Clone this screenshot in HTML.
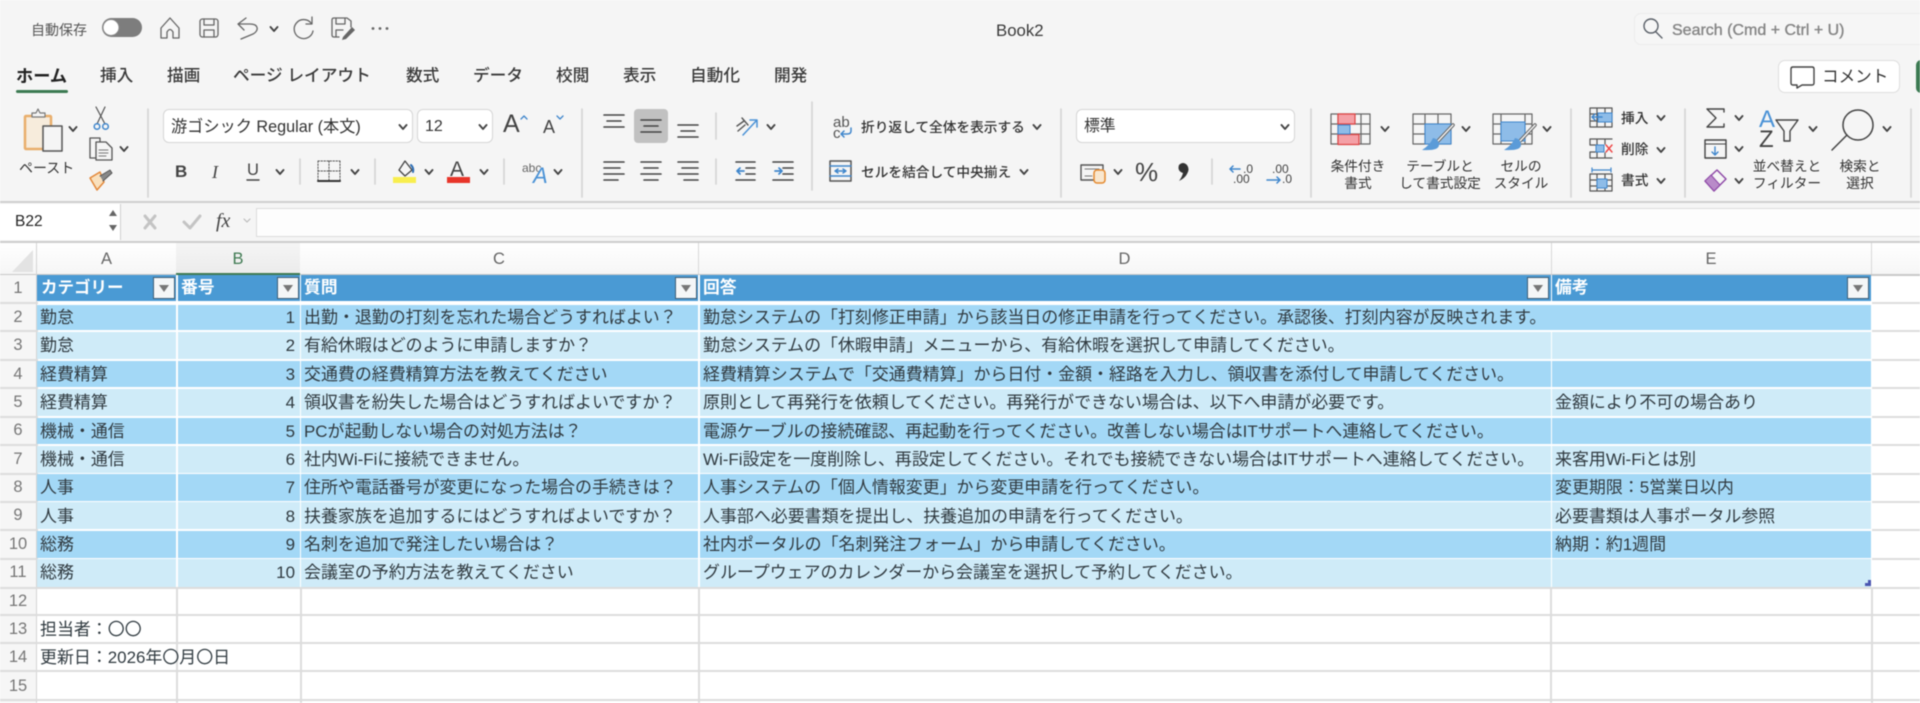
<!DOCTYPE html>
<html lang="ja">
<head>
<meta charset="utf-8">
<title>Book2</title>
<style>
html,body{margin:0;padding:0;width:1920px;height:703px;overflow:hidden;background:#fff}
#p{position:relative;width:1920px;height:703px;overflow:hidden;background:#fff;font-family:"Liberation Sans","Noto Sans CJK JP",sans-serif;color:#2b2b2b;filter:blur(.4px)}
#p div,#p span{position:absolute;white-space:nowrap}
.t{height:20px;line-height:20px}
.tab{top:65px;font-size:16.7px;height:22px;line-height:22px;color:#3a3a3a;font-weight:500}
.sm{font-size:13.7px;color:#333;height:18px;line-height:18px}
.cw{text-align:center;transform:translateX(-50%)}
.f{height:28px;left:0;width:1872px}
.f1{background:#a3d8f6}.f2{background:#cfebf8}
.f span{top:0;font-size:16.95px;line-height:28px;height:28px;color:#303a40}
.hd span{top:0;font-size:16.8px;line-height:26px;height:26px;color:#fff;font-weight:700}
.a{left:40px}.b{left:176px;width:119px;text-align:right}.c{left:304px}.d{left:703px}.e{left:1555px}
.v{top:0;bottom:0;width:2px;background:#fff}
.hd{left:0;top:275px;height:26px;width:1872px;background:#4a9ad4}
.fb{top:2px;width:22px;height:22px;box-sizing:border-box;background:#f4f6f7;border:1.5px solid #3d5f77}
.fb:after{content:"";position:absolute;left:5px;top:7px;border-left:5.5px solid transparent;border-right:5.5px solid transparent;border-top:7px solid #777}
.rh{left:0;width:36px;text-align:center;font-size:16.5px;height:20px;line-height:20px;color:#777}
.ch{top:249px;height:20px;line-height:20px;font-size:16.5px;color:#666;text-align:center}
.hl{height:2px;left:0;width:1920px;background:#dcdcdc}
.vl{width:2px;top:587px;height:116px;background:#dcdcdc}
</style>
</head>
<body>
<div id="p">
<!-- chrome background -->
<div style="left:0;top:0;width:1920px;height:201px;background:#f5f5f5"></div>
<div style="left:0;top:201px;width:1920px;height:2px;background:#cfcfcf"></div>
<div style="left:0;top:203px;width:1920px;height:38px;background:#f5f5f5"></div>
<div style="left:0;top:241px;width:1920px;height:2px;background:#cdcdcd"></div>

<!-- title bar text -->
<span class="t" style="left:31px;top:20px;font-size:14px;color:#555">自動保存</span>
<span class="t" style="left:996px;top:21px;font-size:16.8px;color:#3a3a3a">Book2</span>
<div style="left:1634px;top:13px;width:300px;height:30px;border:1px solid #ececec;background:#f6f6f6;border-radius:7px"></div>
<span class="t" style="left:1672px;top:21px;font-size:16px;color:#858585;-webkit-text-stroke:.35px #858585">Search (Cmd + Ctrl + U)</span>

<!-- tabs -->
<span class="tab" style="left:16px;font-weight:700;color:#222;font-size:17.2px">ホーム</span>
<div style="left:16px;top:90px;width:52px;height:3px;background:#3c7a52;border-radius:2px"></div>
<span class="tab" style="left:100px">挿入</span>
<span class="tab" style="left:167px">描画</span>
<span class="tab" style="left:233px">ページ レイアウト</span>
<span class="tab" style="left:406px">数式</span>
<span class="tab" style="left:473px">データ</span>
<span class="tab" style="left:556px">校閲</span>
<span class="tab" style="left:623px">表示</span>
<span class="tab" style="left:690px">自動化</span>
<span class="tab" style="left:774px">開発</span>

<div style="left:1778px;top:60px;width:122px;height:33px;box-sizing:border-box;background:#fff;border:1px solid #dedede;border-radius:7px"></div>
<span class="t" style="left:1822px;top:67px;font-size:16.6px;color:#333">コメント</span>
<div style="left:1916px;top:60px;width:12px;height:33px;background:#3c7a52;border-radius:5px"></div>

<!-- boxes -->
<div style="left:163px;top:109px;width:250px;height:34px;box-sizing:border-box;background:#fff;border:1px solid #d6d6d6;border-radius:6px"></div>
<div style="left:417px;top:109px;width:76px;height:34px;box-sizing:border-box;background:#fff;border:1px solid #d6d6d6;border-radius:6px"></div>
<div style="left:1076px;top:109px;width:219px;height:34px;box-sizing:border-box;background:#fff;border:1px solid #d6d6d6;border-radius:6px"></div>
<div style="left:634px;top:109px;width:34px;height:34px;background:#c1c1c1;border-radius:4px"></div>
<span class="t" style="left:171px;top:117px;font-size:16.2px;color:#333">游ゴシック Regular (本文)</span>
<span class="t" style="left:425px;top:117px;font-size:16px;color:#333">12</span>
<span class="t" style="left:1084px;top:117px;font-size:15.8px;color:#333">標準</span>

<!-- ribbon labels -->
<span class="sm" style="left:19px;top:159px;font-size:14px">ペースト</span>
<span class="sm" style="left:861px;top:119px;font-weight:500">折り返して全体を表示する</span>
<span class="sm" style="left:861px;top:164px;font-weight:500">セルを結合して中央揃え</span>
<span class="sm cw" style="left:1358px;top:158px">条件付き</span>
<span class="sm cw" style="left:1358px;top:175px">書式</span>
<span class="sm cw" style="left:1440px;top:158px">テーブルと</span>
<span class="sm cw" style="left:1440px;top:175px">して書式設定</span>
<span class="sm cw" style="left:1521px;top:158px">セルの</span>
<span class="sm cw" style="left:1521px;top:175px">スタイル</span>
<span class="sm" style="left:1621px;top:110px;font-weight:500">挿入</span>
<span class="sm" style="left:1621px;top:141px;font-weight:500">削除</span>
<span class="sm" style="left:1621px;top:172px;font-weight:500">書式</span>
<span class="sm cw" style="left:1787px;top:158px">並べ替えと</span>
<span class="sm cw" style="left:1787px;top:175px">フィルター</span>
<span class="sm cw" style="left:1860px;top:158px">検索と</span>
<span class="sm cw" style="left:1860px;top:175px">選択</span>
<span class="t" style="left:175px;top:162px;font-size:17px;font-weight:700;color:#444">B</span>
<span class="t" style="left:212px;top:162px;font-size:18px;font-style:italic;font-family:'Liberation Serif',serif;color:#444">I</span>
<span class="t" style="left:247px;top:160px;font-size:16.5px;color:#444">U</span>
<span class="t" style="left:1135px;top:162px;font-size:26px;line-height:20px;color:#444">%</span>
<span class="t" style="left:1243px;top:159px;font-size:12px;color:#444">.0</span>
<span class="t" style="left:1233px;top:169px;font-size:12px;color:#444">.00</span>
<span class="t" style="left:1272px;top:159px;font-size:12px;color:#444">.00</span>
<span class="t" style="left:1282px;top:169px;font-size:12px;color:#444">.0</span>
<span class="t" style="left:833px;top:113px;font-size:15px;color:#555">ab</span>
<span class="t" style="left:833px;top:124px;font-size:15px;color:#555">c</span>
<span class="t" style="left:522px;top:158px;font-size:12px;color:#666">abc</span>
<span class="t" style="left:503px;top:114px;font-size:25px;color:#444">A</span>
<span class="t" style="left:543px;top:117px;font-size:18px;color:#444">A</span>
<span class="t" style="left:1759px;top:110px;font-size:24px;color:#4a92d6">A</span>
<span class="t" style="left:1759px;top:130px;font-size:24px;color:#444">Z</span>
<span class="t" style="left:450px;top:160px;font-size:21px;color:#444">A</span>
<span class="t" style="left:533px;top:166px;font-size:22px;font-style:italic;color:#4a92d6">A</span>

<!-- formula bar -->
<div style="left:0;top:204px;width:120px;height:36px;background:#fff;border-right:1px solid #cfcfcf"></div>
<span class="t" style="left:15px;top:212px;font-size:15.5px;color:#222">B22</span>
<div style="left:256px;top:208px;width:1664px;height:27px;background:#fdfdfd;border-top:1px solid #dcdcdc;border-bottom:1px solid #dcdcdc;border-left:1px solid #dcdcdc"></div>
<span class="t" style="left:216px;top:211px;font-size:20px;font-style:italic;font-family:'Liberation Serif',serif;color:#444">fx</span>

<!-- icons -->
<svg style="position:absolute;left:0;top:0" width="1920" height="243" viewBox="0 0 1920 243" fill="none" stroke-linecap="round" stroke-linejoin="round">
<defs><path id="ch" d="M-3.5-2 0 2 3.5-2" stroke="#444" stroke-width="1.9"/></defs>
<!-- toggle -->
<rect x="102" y="18" width="40" height="19" rx="9.5" fill="#7d7d7d"/>
<circle cx="111" cy="27.500" r="8" fill="#fff" stroke="#888"/>
<g stroke="#666" stroke-width="1.3">
<path d="M161 28 170 18 179 28V38H173V32Q170 27 167 32V38H161Z"/>
<rect x="200" y="19" width="18" height="18" rx="2.500"/><path d="M204 19V25H214V19M204 37V30H214V37"/>
<path d="M246 18 238 24 244 30M238 24H250C259 24 259 31 253 34L241 39"/>
<path d="M311 23A9.500 9.500 0 1 0 313 31M312 17V24H306"/>
<path d="M351 27V21L347 18H334Q332 18 332 20V35Q332 37 334 37H339M336 18V24H345V18M336 37V30H343"/>
</g>
<path d="M343 37 352 27 355 30 346 39 342 40Z" fill="#666"/>
<g fill="#666"><circle cx="373" cy="28.500" r="1.400"/><circle cx="380" cy="28.500" r="1.400"/><circle cx="387" cy="28.500" r="1.400"/></g>
<g stroke="#5a6068" stroke-width="1.4"><circle cx="1651" cy="26" r="7"/><path d="M1656 32 1662 38"/></g>
<path d="M1791 69Q1791 67 1793 67H1812Q1814 67 1814 69V83Q1814 85 1812 85H1802L1797 88V85H1793Q1791 85 1791 83Z" stroke="#444" stroke-width="1.4"/>

<!-- separators -->
<g stroke="#d4d4d4" stroke-width="1.6">
<path d="M148 109V197M582 109V197M812 102V190M1061 109V197M1311 109V197M1571 109V197M1685 109V197M1911 109V197"/>
<path d="M300 159V184M375 159V184M504 159V184M716 113V139M716 159V184M1212 159V184"/>
</g>

<!-- clipboard -->
<rect x="25" y="116" width="26" height="33" rx="1" stroke="#e9ae6c" stroke-width="2.500" fill="#f7ecdc"/>
<path d="M32 117V113H36L38 109 40 113H45V117Z" fill="#f5f5f5" stroke="#777" stroke-width="1.2"/>
<rect x="43" y="126" width="19" height="25" fill="#f5f5f5" stroke="#555" stroke-width="1.5"/>
<!-- scissors -->
<path d="M96 107 105 124M105 107 97 124" stroke="#555" stroke-width="1.2"/>
<circle cx="97" cy="126.500" r="2.800" stroke="#3f86cc" stroke-width="1.500"/><circle cx="105.500" cy="126.500" r="2.800" stroke="#3f86cc" stroke-width="1.500"/>
<!-- copy -->
<path d="M99 158H90V138H100V142" stroke="#555" stroke-width="1.300"/>
<path d="M96 142H106L112 148V160H96Z" fill="#f5f5f5" stroke="#555" stroke-width="1.300"/><path d="M99 150H108M99 153H108M99 156H106" stroke="#777"/>
<!-- format brush -->
<path d="M90 178 100 172 104 182 97 190Z" fill="#f9e0bd" stroke="#e3883a" stroke-width="1.500"/><path d="M100 176 110 170 112 173 103 181" fill="#888" stroke="#555"/>
<!-- size carets -->
<path d="M522 119 525 116 528 119M558 116 561 119 564 116" stroke="#3f86cc" stroke-width="1.300" transform="translate(-1 0)"/>
<!-- underline -->
<path d="M247 180H259" stroke="#444" stroke-width="1.400"/>
<!-- borders -->
<path d="M318 161H340M318 171H340M329 161V181M318 161V181M340 161V181" stroke="#555" stroke-dasharray="1.500 1.500"/>
<path d="M318 181H340" stroke="#333" stroke-width="2"/>
<!-- fill colour -->
<path d="M399 170 405 161 412 170 405 176Z" stroke="#444" stroke-width="1.300"/><path d="M411 165Q414 168 413 172" stroke="#2f6fb5" stroke-width="2"/>
<rect x="393" y="177" width="23" height="6" fill="#f8ee4e"/>
<rect x="447" y="177" width="23" height="6" fill="#e8352a"/>
<!-- align -->
<g stroke="#444" stroke-width="1.600">
<path d="M604 115H624M607 121H621M604 127H624"/>
<path d="M641 120H661M644 126H658M641 132H661"/>
<path d="M678 125H698M681 131H695M678 137H698"/>
<path d="M604 162H624M604 168H620M604 174H624M604 180H618"/>
<path d="M641 162H661M644 168H658M641 174H661M644 180H658"/>
<path d="M678 162H698M682 168H698M678 174H698M684 180H698"/>
<path d="M736 162H755M746 168H755M746 174H755M736 180H755"/>
<path d="M773 162H793M783 168H793M783 174H793M773 180H793"/>
</g>
<path d="M737 171H744M737 171 740 168M737 171 740 174M782 171H775M782 171 779 168M782 171 779 174" stroke="#3f86cc" stroke-width="1.700"/>
<path d="M743 135 757 120M750 120H757V127" stroke="#4a92d6" stroke-width="1.500"/>
<path d="M737 126 744 121M742 118 748 125M738 131 745 125" stroke="#555" stroke-width="1.400"/>
<!-- wrap arrow -->
<path d="M851 128V131Q851 134 847 134H841M841 134 844 131M841 134 844 137" stroke="#3f86cc" stroke-width="1.500"/>
<!-- merge -->
<rect x="830" y="161" width="21" height="20" stroke="#555" stroke-width="1.500"/><path d="M830 166H851M830 176H851" stroke="#3f86cc" stroke-width="1.400"/>
<path d="M835 171H846M835 171 838 169M835 171 838 173M846 171 843 169M846 171 843 173" stroke="#3f86cc" stroke-width="1.400"/>
<!-- accounting -->
<rect x="1081" y="165" width="22" height="15" stroke="#555" stroke-width="1.400"/><path d="M1085 169H1099M1085 176H1092" stroke="#777"/>
<rect x="1094" y="170" width="11" height="13" rx="3" fill="#f9e7cf" stroke="#e58a30" stroke-width="1.500"/>
<!-- comma style -->
<path d="M1179 165Q1183 161 1187 165 1190 169 1187 174 1185 178 1179 181 1182 177 1183 173 1177 171 1179 165Z" fill="#333"/>
<path d="M1230 169H1240M1230 169 1233 166M1230 169 1233 172M1280 180H1267M1280 180 1277 177M1280 180 1277 183" stroke="#3f86cc" stroke-width="1.500"/>
<!-- conditional -->
<g stroke="#666" stroke-width="1.200">
<path d="M1331 114H1370V144H1331ZM1331 124H1370M1331 134H1370M1338 114V144M1361 114V144"/>
</g>
<rect x="1338" y="114" width="17" height="10" fill="#f4a0a6" stroke="#d44" stroke-width="1.200"/>
<rect x="1338" y="134.500" width="21" height="10" fill="#f4a0a6" stroke="#d44" stroke-width="1.200"/>
<rect x="1338" y="125" width="12" height="9" fill="#8ebce8" stroke="#3f86cc"/>
<!-- table -->
<g stroke="#666" stroke-width="1.200"><path d="M1413 114H1451V144H1413ZM1413 124H1451M1413 134H1451M1425 114V144M1438 114V144"/></g>
<rect x="1425" y="124" width="26" height="20" fill="#8ebce8" stroke="#3f86cc"/>
<path d="M1453 125 1438 141" stroke="#666" stroke-width="3.500"/><path d="M1453 125 1438 141" stroke="#f5f5f5" stroke-width="1.500"/>
<path d="M1433 138Q1439 139 1439 145T1422 150Q1430 145 1433 138Z" fill="#5b9bd8"/>
<!-- style -->
<g stroke="#666" stroke-width="1.200"><path d="M1493 114H1532V144H1493ZM1493 124H1532M1493 134H1532M1501 114V144M1525 114V144"/></g>
<rect x="1501" y="122" width="24" height="19" fill="#8ebce8" stroke="#3f86cc"/>
<path d="M1535 125 1520 141" stroke="#666" stroke-width="3.500"/><path d="M1535 125 1520 141" stroke="#f5f5f5" stroke-width="1.500"/>
<path d="M1515 138Q1521 139 1521 145T1504 150Q1512 145 1515 138Z" fill="#5b9bd8"/>
<!-- insert delete format -->
<g stroke="#555" stroke-width="1.200">
<path d="M1590 108H1612V127H1590ZM1590 114H1612M1590 121H1612M1597 108V127M1605 108V127"/>
<path d="M1590 139H1612M1590 158H1612M1590 139V145H1598V152H1590V158M1597 139V145M1605 139V144M1605 153V158M1597 152V158"/>
<path d="M1590 174H1612V191H1590ZM1590 180H1612M1590 186H1612M1597 174V191M1605 174V191"/>
</g>
<rect x="1598" y="113" width="14" height="9" fill="#8ebce8" stroke="#3f86cc"/>
<path d="M1592 117H1602M1592 117 1595 114M1592 117 1595 120" stroke="#3f86cc" stroke-width="1.500" fill="none"/>
<rect x="1596" y="145" width="8" height="7" fill="#8ebce8" stroke="#3f86cc"/>
<path d="M1606 145 1612 152M1612 145 1606 152" stroke="#e44" stroke-width="1.400"/>
<rect x="1597" y="179" width="10" height="9" fill="#8ebce8" stroke="#3f86cc"/>
<path d="M1592 170H1611M1592 168V172M1611 168V172" stroke="#3f86cc" stroke-width="1.200"/>
<!-- sigma etc -->
<path d="M1724 112V109H1707L1716 118 1707 127H1724V124" stroke="#444" stroke-width="1.400"/>
<rect x="1705" y="140" width="21" height="18" stroke="#444" stroke-width="1.400"/><path d="M1705 144H1726" stroke="#444"/>
<path d="M1715 147V155M1715 155 1712 152M1715 155 1718 152" stroke="#3f86cc" stroke-width="1.400"/>
<path d="M1705 181 1717 170 1726 179 1714 191Z" stroke="#8f4aa8" stroke-width="1.500" fill="#f5f5f5"/><path d="M1705 181 1711 175 1720 185 1714 191Z" fill="#b98bc9" stroke="#8f4aa8"/>
<path d="M1776 120H1798L1790 131V141H1784V131Z" stroke="#444" stroke-width="1.400"/>
<circle cx="1858" cy="125" r="15" stroke="#444" stroke-width="1.500"/><path d="M1847 135 1832 150" stroke="#444" stroke-width="1.500"/>

<!-- name-box arrows -->
<path d="M109 216 113 210 117 216ZM109 225 113 231 117 225Z" fill="#666"/>
<path d="M145 216 155 228M155 216 145 228" stroke="#c4c4c4" stroke-width="3"/>
<path d="M184 222 190 228 200 216" stroke="#c4c4c4" stroke-width="3"/>
<path d="M244 219 247 222 250 219" stroke="#bbb" stroke-width="1.200"/>

<!-- chevrons -->
<use href="#ch" x="274" y="29"/><use href="#ch" x="73" y="129"/><use href="#ch" x="124" y="149"/><use href="#ch" x="403" y="127"/><use href="#ch" x="483" y="127"/>
<use href="#ch" x="280" y="172"/><use href="#ch" x="355" y="172"/><use href="#ch" x="429" y="172"/><use href="#ch" x="484" y="172"/><use href="#ch" x="558" y="172"/>
<use href="#ch" x="771" y="127"/><use href="#ch" x="1037" y="127"/><use href="#ch" x="1024" y="172"/><use href="#ch" x="1285" y="127"/><use href="#ch" x="1118" y="172"/>
<use href="#ch" x="1385" y="129"/><use href="#ch" x="1466" y="129"/><use href="#ch" x="1547" y="129"/>
<use href="#ch" x="1661" y="118"/><use href="#ch" x="1661" y="150"/><use href="#ch" x="1661" y="181"/>
<use href="#ch" x="1739" y="118"/><use href="#ch" x="1739" y="149"/><use href="#ch" x="1739" y="181"/><use href="#ch" x="1813" y="129"/><use href="#ch" x="1887" y="129"/>
</svg>

<!-- column header -->
<div style="left:0;top:243px;width:1920px;height:31px;background:linear-gradient(#fff,#f6f6f6)"></div>
<div style="left:0;top:274px;width:1920px;height:1.500px;background:#c8c8c8"></div>
<div style="left:176px;top:243px;width:124px;height:31px;background:linear-gradient(#f5f5f5,#ebebeb)"></div>
<div style="left:176px;top:273px;width:124px;height:2.500px;background:#3f7a52"></div>
<svg style="position:absolute;left:0;top:243px" width="40" height="32"><path d="M12 29 33 7V29Z" fill="#e3e3e3"/></svg>
<div style="left:36px;top:243px;width:1px;height:32px;background:#d4d4d4"></div>
<div style="left:698px;top:243px;width:1px;height:31px;background:#d8d8d8"></div>
<div style="left:1551px;top:243px;width:1px;height:31px;background:#d8d8d8"></div>
<div style="left:1871px;top:243px;width:1px;height:31px;background:#d8d8d8"></div>
<span class="ch" style="left:37px;width:139px">A</span>
<span class="ch" style="left:176px;width:124px;color:#3f7a52">B</span>
<span class="ch" style="left:300px;width:398px">C</span>
<span class="ch" style="left:698px;width:853px">D</span>
<span class="ch" style="left:1551px;width:320px">E</span>

<!-- row header -->
<div style="left:0;top:275px;width:36px;height:428px;background:#f6f6f6;border-right:1.500px solid #d4d4d4"></div>

<!-- right side lines and rows 12+ -->
<div class="hl" style="top:302px"></div><div class="hl" style="top:330px"></div><div class="hl" style="top:359px"></div><div class="hl" style="top:387px"></div><div class="hl" style="top:416px"></div><div class="hl" style="top:444px"></div><div class="hl" style="top:472.500px"></div><div class="hl" style="top:500.500px"></div><div class="hl" style="top:529px"></div><div class="hl" style="top:557.500px"></div><div class="hl" style="top:586.500px"></div><div class="hl" style="top:614px"></div><div class="hl" style="top:642px"></div><div class="hl" style="top:670px"></div><div class="hl" style="top:699px"></div>
<div class="vl" style="left:176px"></div><div class="vl" style="left:299.500px"></div><div class="vl" style="left:698px"></div><div class="vl" style="left:1550px"></div><div class="vl" style="left:1871px"></div>
<div style="left:37.500px;top:301px;width:1834px;height:285.500px;background:#fff"></div>

<div class="rh" style="top:278px">1</div><div class="rh" style="top:307px">2</div><div class="rh" style="top:335px">3</div><div class="rh" style="top:364px">4</div><div class="rh" style="top:392px">5</div><div class="rh" style="top:420px">6</div><div class="rh" style="top:449px">7</div><div class="rh" style="top:477px">8</div><div class="rh" style="top:505px">9</div><div class="rh" style="top:534px">10</div><div class="rh" style="top:562px">11</div><div class="rh" style="top:591px">12</div><div class="rh" style="top:619px">13</div><div class="rh" style="top:647px">14</div><div class="rh" style="top:676px">15</div>

<!-- header row -->
<div class="hd" style="left:37px;width:1834px"></div>
<div class="hd" style="background:none;width:1872px">
<span class="a" style="left:41px;font-size:16.5px">カテゴリー</span><span style="left:181px">番号</span><span style="left:304px">質問</span><span style="left:703px">回答</span><span style="left:1555px">備考</span>
<div class="fb" style="left:153px"></div><div class="fb" style="left:277px"></div><div class="fb" style="left:675px"></div><div class="fb" style="left:1527px"></div><div class="fb" style="left:1847px"></div>
<div class="v" style="left:176px;width:1.500px"></div><div class="v" style="left:299.500px;width:1.500px"></div><div class="v" style="left:698px;width:1.500px"></div><div class="v" style="left:1550.500px;width:1.500px"></div>
</div>

<!-- data rows -->
<div class="f f1" style="top:305px;height:25px;left:37px;width:1834px"></div>
<div class="f f2" style="top:332px;height:27px;left:37px;width:1834px"></div>
<div class="f f1" style="top:360.500px;height:26.500px;left:37px;width:1834px"></div>
<div class="f f2" style="top:389px;height:27px;left:37px;width:1834px"></div>
<div class="f f1" style="top:417.500px;height:26.500px;left:37px;width:1834px"></div>
<div class="f f2" style="top:445.500px;height:27px;left:37px;width:1834px"></div>
<div class="f f1" style="top:474px;height:26.500px;left:37px;width:1834px"></div>
<div class="f f2" style="top:502px;height:27px;left:37px;width:1834px"></div>
<div class="f f1" style="top:530.500px;height:27px;left:37px;width:1834px"></div>
<div class="f f2" style="top:559px;height:28px;left:37px;width:1834px"></div>
<div class="v" style="left:176px;top:305px;height:282px;bottom:auto;width:1.500px"></div>
<div class="v" style="left:299.500px;top:305px;height:282px;bottom:auto;width:1.500px"></div>
<div class="v" style="left:698px;top:305px;height:282px;bottom:auto;width:1.500px"></div>
<div class="v" style="left:1550.500px;top:332px;height:255px;bottom:auto;width:1.500px"></div>

<div class="f" style="top:304px;background:none"><span class="a">勤怠</span><span class="b">1</span><span class="c">出勤・退勤の打刻を忘れた場合どうすればよい？</span><span class="d">勤怠システムの「打刻修正申請」から該当日の修正申請を行ってください。承認後、打刻内容が反映されます。</span></div>
<div class="f" style="top:332px;background:none"><span class="a">勤怠</span><span class="b">2</span><span class="c">有給休暇はどのように申請しますか？</span><span class="d">勤怠システムの「休暇申請」メニューから、有給休暇を選択して申請してください。</span></div>
<div class="f" style="top:360.500px;background:none"><span class="a">経費精算</span><span class="b">3</span><span class="c">交通費の経費精算方法を教えてください</span><span class="d">経費精算システムで「交通費精算」から日付・金額・経路を入力し、領収書を添付して申請してください。</span></div>
<div class="f" style="top:389px;background:none"><span class="a">経費精算</span><span class="b">4</span><span class="c">領収書を紛失した場合はどうすればよいですか？</span><span class="d">原則として再発行を依頼してください。再発行ができない場合は、以下へ申請が必要です。</span><span class="e">金額により不可の場合あり</span></div>
<div class="f" style="top:417.500px;background:none"><span class="a">機械・通信</span><span class="b">5</span><span class="c">PCが起動しない場合の対処方法は？</span><span class="d">電源ケーブルの接続確認、再起動を行ってください。改善しない場合はITサポートへ連絡してください。</span></div>
<div class="f" style="top:446px;background:none"><span class="a">機械・通信</span><span class="b">6</span><span class="c">社内Wi-Fiに接続できません。</span><span class="d">Wi-Fi設定を一度削除し、再設定してください。それでも接続できない場合はITサポートへ連絡してください。</span><span class="e">来客用Wi-Fiとは別</span></div>
<div class="f" style="top:473.500px;background:none"><span class="a">人事</span><span class="b">7</span><span class="c">住所や電話番号が変更になった場合の手続きは？</span><span class="d">人事システムの「個人情報変更」から変更申請を行ってください。</span><span class="e">変更期限：5営業日以内</span></div>
<div class="f" style="top:502.500px;background:none"><span class="a">人事</span><span class="b">8</span><span class="c">扶養家族を追加するにはどうすればよいですか？</span><span class="d">人事部へ必要書類を提出し、扶養追加の申請を行ってください。</span><span class="e">必要書類は人事ポータル参照</span></div>
<div class="f" style="top:531px;background:none"><span class="a">総務</span><span class="b">9</span><span class="c">名刺を追加で発注したい場合は？</span><span class="d">社内ポータルの「名刺発注フォーム」から申請してください。</span><span class="e">納期：約1週間</span></div>
<div class="f" style="top:558.500px;background:none"><span class="a">総務</span><span class="b">10</span><span class="c">会議室の予約方法を教えてください</span><span class="d">グループウェアのカレンダーから会議室を選択して予約してください。</span></div>
<div class="f" style="top:616px;background:none"><span class="a">担当者：〇〇</span></div>
<div class="f" style="top:644px;background:none"><span class="a">更新日：2026年〇月〇日</span></div>

<svg style="position:absolute;left:1863px;top:578px" width="10" height="10"><path d="M2 8H8V2H5V5H2Z" fill="#4a55b0"/></svg>
</div>
</body>
</html>
